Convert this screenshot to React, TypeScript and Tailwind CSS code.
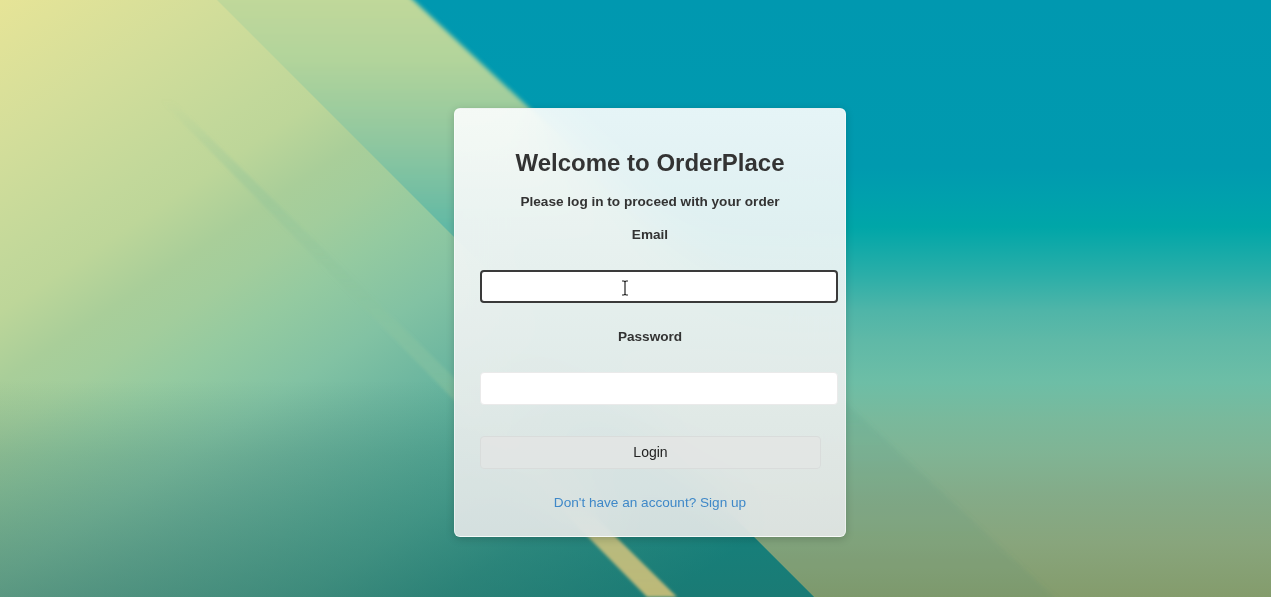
import React from "react";

// Wallpaper: soft diagonal bands, drawn once behind the login card
function Wallpaper() {
  return (
    <svg
      className="absolute inset-0 h-full w-full"
      viewBox="0 0 1271 597"
      preserveAspectRatio="none"
    >
      <defs>
        <linearGradient id="wp-right" x1="0" y1="0" x2="0" y2="597" gradientUnits="userSpaceOnUse">
          <stop offset="0" stopColor="#0098b0" />
          <stop offset="0.28" stopColor="#009aaf" />
          <stop offset="0.33" stopColor="#00a0ad" />
          <stop offset="0.38" stopColor="#00a6a8" />
          <stop offset="0.46" stopColor="#2aaea8" />
          <stop offset="0.52" stopColor="#4fb5a8" />
          <stop offset="0.57" stopColor="#5fb9a7" />
          <stop offset="0.64" stopColor="#6dbea6" />
          <stop offset="0.7" stopColor="#79b99c" />
          <stop offset="0.76" stopColor="#80b494" />
          <stop offset="0.83" stopColor="#84ab88" />
          <stop offset="0.91" stopColor="#88a57c" />
          <stop offset="1" stopColor="#849c6c" />
        </linearGradient>
        <linearGradient id="wp-left" x1="0" y1="0" x2="480" y2="720" gradientUnits="userSpaceOnUse">
          <stop offset="0" stopColor="#e6e497" />
          <stop offset="0.133" stopColor="#d4de9a" />
          <stop offset="0.258" stopColor="#c2d89a" />
          <stop offset="0.3" stopColor="#bdd699" />
          <stop offset="0.367" stopColor="#a9ce99" />
          <stop offset="0.417" stopColor="#a2cd9c" />
          <stop offset="0.475" stopColor="#94caa0" />
          <stop offset="0.558" stopColor="#82c2a3" />
          <stop offset="0.625" stopColor="#70b8a0" />
          <stop offset="0.767" stopColor="#4aa898" />
          <stop offset="0.858" stopColor="#2a9890" />
          <stop offset="1" stopColor="#0a8c8c" />
        </linearGradient>
        <linearGradient id="wp-shade" x1="0" y1="380" x2="0" y2="597" gradientUnits="userSpaceOnUse">
          <stop offset="0" stopColor="#2e6658" stopOpacity="0" />
          <stop offset="0.35" stopColor="#2e6658" stopOpacity="0.2" />
          <stop offset="1" stopColor="#2e6658" stopOpacity="0.45" />
        </linearGradient>
        <linearGradient id="wp-band" x1="0" y1="0" x2="0" y2="597" gradientUnits="userSpaceOnUse">
          <stop offset="0" stopColor="#c0d89a" />
          <stop offset="0.1" stopColor="#b2d49b" />
          <stop offset="0.25" stopColor="#8cc6a0" />
          <stop offset="0.38" stopColor="#62b9a5" />
          <stop offset="0.5" stopColor="#5bb8a6" />
          <stop offset="0.6" stopColor="#66bba4" stopOpacity="0.25" />
          <stop offset="0.72" stopColor="#4f9582" stopOpacity="0.14" />
          <stop offset="1" stopColor="#5a8a70" stopOpacity="0.14" />
        </linearGradient>
        <linearGradient id="wp-stripe" x1="0" y1="100" x2="0" y2="597" gradientUnits="userSpaceOnUse">
          <stop offset="0" stopColor="#86bf98" stopOpacity="0" />
          <stop offset="0.15" stopColor="#86bf98" stopOpacity="0.3" />
          <stop offset="0.4" stopColor="#86bf98" stopOpacity="0.15" />
          <stop offset="0.55" stopColor="#c8dea0" stopOpacity="0.15" />
          <stop offset="0.76" stopColor="#d6d894" stopOpacity="0.45" />
          <stop offset="0.885" stopColor="#d2c47e" stopOpacity="0.85" />
          <stop offset="1" stopColor="#cfc078" stopOpacity="0.9" />
        </linearGradient>
        <filter id="wp-soft" x="-10%" y="-10%" width="120%" height="120%">
          <feGaussianBlur stdDeviation="2" />
        </filter>
        <filter id="wp-softer" x="-10%" y="-10%" width="120%" height="120%">
          <feGaussianBlur stdDeviation="1.5" />
        </filter>
      </defs>

      <rect x="0" y="0" width="1271" height="597" fill="url(#wp-right)" />
      <polygon points="140,-30 381,-30 1087,627 737,627" fill="url(#wp-band)" filter="url(#wp-soft)" />
      <polygon points="0,0 217,0 814,597 0,597" fill="url(#wp-left)" />
      <polygon points="0,0 217,0 814,597 0,597" fill="url(#wp-shade)" />
      <polygon points="160,100 172,100 677,597 647,597" fill="url(#wp-stripe)" filter="url(#wp-softer)" />
    </svg>
  );
}

function IBeam() {
  return (
    <svg width="8" height="16" viewBox="0 0 8 16" className="absolute left-[141px] top-[10px]">
      <path d="M1 1h2l1 1 1-1h2M4 2v12M1 15h2l1-1 1 1h2" fill="none" stroke="#222" strokeWidth="1.2" />
    </svg>
  );
}

export default function App() {
  return (
    <div className="relative h-screen w-full overflow-hidden font-['Liberation_Sans',Arial,sans-serif]">
      <Wallpaper />

      <div className="relative flex justify-center pl-[29px] pt-[108px]">
        {/* Login card */}
        <div className="h-[429px] w-[392px] rounded-md border border-white/50 bg-linear-to-b from-white/90 to-[#e6e9e9]/90 px-[25px] pt-[24px] shadow-[0_2px_8px_rgba(0,0,0,0.18)] backdrop-blur-xl">
          <h2 className="mt-[16px] text-center text-[24px] font-bold leading-[28px] text-[#333]">
            Welcome to OrderPlace
          </h2>
          <p className="mt-[17px] text-center text-[13.6px] font-bold leading-[16px] text-[#333]">
            Please log in to proceed with your order
          </p>

          <label className="mt-[17px] block text-center text-[13.6px] font-bold leading-[16px] text-[#333]">
            Email
          </label>
          <div className="relative mt-[27px] w-[358px]">
            <input
              type="email"
              className="block h-[33px] w-[358px] rounded-[4px] border-2 border-[#3a3a3a] bg-white px-2 text-[14px] outline-none"
            />
            <IBeam />
          </div>

          <label className="mt-[26px] block text-center text-[13.6px] font-bold leading-[16px] text-[#333]">
            Password
          </label>
          <input
            type="password"
            className="mt-[27px] block h-[33px] w-[358px] rounded-[4px] border border-[#eaeaea] bg-white px-2 text-[14px] outline-none"
          />

          <button className="mt-[31px] block h-[33px] w-[341px] rounded-[4px] border border-[#d9dcdb] bg-[#e3e5e4]/80 text-[14px] text-[#222]">
            Login
          </button>

          <p className="mt-[26px] text-center text-[13.6px] leading-[16px]">
            <a href="#" className="text-[#3f88c8]">
              Don&apos;t have an account? Sign up
            </a>
          </p>
        </div>
      </div>
    </div>
  );
}
